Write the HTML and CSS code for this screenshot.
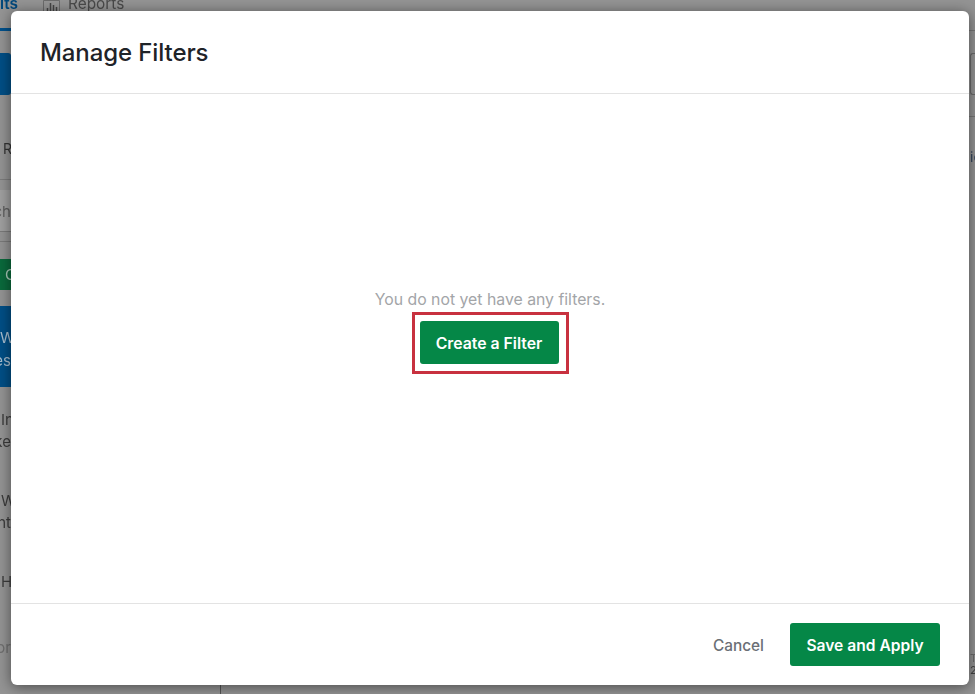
FILE: index.html
```html
<!DOCTYPE html>
<html lang="en">
<head>
<meta charset="utf-8">
<title>Manage Filters</title>
<link rel="stylesheet" href="styles.css">
</head>
<body>
<div class="backdrop">
  <div class="tabs">
    <span class="tab tab-active">Results</span>
    <span class="tab tab-reports">
      <svg class="tab-icon" viewBox="0 0 17 12" width="17" height="12"><path d="M.5 12V.5h16V12" fill="none" stroke="#6b6b6b"/><path d="M4.5 12V8M7.5 12V3M10.5 12V5M13.5 12V7" stroke="#454545" stroke-width="1.5"/></svg>
      Reports
    </span>
  </div>
  <div class="tab-rule"></div>
  <div class="side">
    <div class="side-primary"></div>
    <div class="side-row side-title">Re</div>
    <div class="side-row side-search">Search</div>
    <div class="side-sep"></div>
    <div class="side-green">Create</div>
    <div class="side-blue"><span>Welcome</span><span class="tail">Responses</span></div>
    <div class="side-item side-item-first"><span>In</span><span class="tail">Make</span></div>
    <div class="side-item side-item-second"><span>W</span><span class="tail">Intent</span></div>
    <div class="side-item side-item-last"><span>H</span></div>
    <div class="side-muted">For</div>
  </div>
</div>
<div class="right-line right-line-top"></div>
<div class="right-line right-line-mid"></div>
<div class="edge-frame"></div>
<div class="side-text-right">ie</div>
<div class="side-text-right side-text-t">T</div>
<div class="side-text-right side-text-n">22</div>
<div class="bottom-rule"></div>
<section class="modal">
  <header class="modal-head"><h1>Manage Filters</h1></header>
  <div class="modal-body">
    <p class="empty">You do not yet have any filters.</p>
    <div class="highlight"><button class="btn btn-create">Create a Filter</button></div>
  </div>
  <footer class="modal-foot">
    <button class="btn-cancel">Cancel</button>
    <button class="btn btn-save">Save and Apply</button>
  </footer>
</section>
</body>
</html>
```
FILE: styles.css
```css
* { box-sizing: border-box; }
html, body { margin: 0; height: 100%; }
body {
  width: 975px;
  height: 694px;
  overflow: hidden;
  position: relative;
  background: #949494;
  font-family: "Inter", "Liberation Sans", sans-serif;
}
.backdrop {
  height: 694px;
  padding-top: 1px;
  filter: blur(0.6px);
  color: #3a3a3a;
  font-size: 15px;
}
.tabs { display: flex; height: 32px; margin-top: -5px; font-size: 15.4px; line-height: 16px; }
.tab-active { color: #00487c; font-weight: 600; width: 43px; text-align: right; direction: rtl; overflow: hidden; white-space: nowrap; padding-right: 25px; height: 16px; }
.tab-reports { display: flex; gap: 8px; color: #4a4a4a; height: 16px; }
.tab-icon { margin-top: 4px; }
.tab-rule { width: 24px; height: 3px; background: #00518c; }
.side { width: 11px; }
.side-primary { width: 14px; height: 42px; margin-top: 22px; background: #004f86; border-radius: 3px; margin-left: -3px; }
.side-row { width: 11px; white-space: nowrap; overflow: hidden; }
.side-title { height: 85px; padding: 45px 0 0 3px; font-size: 14px; line-height: 18px; border-bottom: 1px solid #7c7c7c; color: #333; }
.side-search { height: 42px; margin-top: 10px; padding-top: 13px; background: #a0a0a0; border-bottom: 1px solid #7a7a7a; direction: rtl; color: #5f5f5f; font-size: 15px; line-height: 18px; }
.side-sep { width: 11px; height: 10px; border-bottom: 1px solid #7a7a7a; }
.side-green { width: 11px; height: 31px; margin-top: 17px; background: #0a6a3c; color: #a9c9b8; font-size: 15px; line-height: 31px; padding-left: 5px; overflow: hidden; white-space: nowrap; }
.side-blue { width: 11px; height: 81px; margin-top: 16px; padding-top: 4px; background: #004f86; color: #a9bfd0; font-size: 15px; line-height: 23px; display: flex; flex-direction: column; justify-content: center; overflow: hidden; white-space: nowrap; }
.side-item { width: 11px; display: flex; flex-direction: column; overflow: hidden; white-space: nowrap; line-height: 22px; font-size: 15px; color: #3c3c3c; }
.side-item span:first-child { padding-left: 1px; }
.tail { direction: rtl; }
.side-item-first { margin-top: 22px; height: 81px; }
.side-item-second { height: 81px; }
.side-item-last { height: 68px; }
.side-muted { width: 11px; overflow: hidden; white-space: nowrap; color: #6f6f6f; font-size: 15px; line-height: 18px; direction: rtl; }
.right-line { position: absolute; left: 969px; width: 6px; height: 1px; background: #777; }
.right-line-top { top: 30px; }
.right-line-mid { top: 116px; }
.edge-frame {
  position: absolute; left: 970px; top: 53px; width: 5px; height: 42px;
  border: 1px solid #6a6a6a; border-right: 0; border-radius: 3px 0 0 3px;
}
.side-text-right {
  position: absolute; left: 970px; top: 148px; font-size: 14px; color: #33445c; line-height: 18px; filter: blur(0.4px);
}
.side-text-t { top: 653px; font-size: 11px; line-height: 11px; color: #6c6c6c; }
.side-text-n { top: 665px; font-size: 11px; line-height: 11px; color: #444; }
.bottom-rule { position: absolute; left: 220px; top: 680px; width: 1px; height: 14px; background: #555; }
.modal {
  position: absolute;
  left: 11px; top: 11px;
  width: 958px; height: 674px;
  background: #fff;
  border-radius: 6px;
  box-shadow: 0 2px 14px rgba(0,0,0,.5);
  display: flex;
  flex-direction: column;
}
.modal-head {
  height: 83px;
  border-bottom: 1px solid #e3e3e3;
  padding: 0 29px;
  display: flex;
  align-items: center;
}
.modal-head h1 {
  margin: 0;
  font-size: 24px;
  font-weight: 500;
  letter-spacing: -0.1px;
  color: #1f2328;
}
.modal-body {
  flex: 1;
  display: flex;
  flex-direction: column;
  align-items: center;
  padding: 196px 0 0 0;
}
.empty {
  margin: 0;
  font-size: 15.8px;
  line-height: 20px;
  color: #a3a5a8;
}
.highlight {
  border: 3px solid #c8313f;
  padding: 6px 7px 7px 5px;
  margin-top: 2px;
  display: flex;
}
.btn {
  border: 0;
  border-radius: 3px;
  background: #058747;
  color: #fff;
  font: 600 15.6px "Inter", "Liberation Sans", sans-serif;
  padding: 1px 0 0;
}
.btn-create { width: 139px; height: 43px; font-size: 15.8px; }
.modal-foot {
  height: 82px;
  border-top: 1px solid #e3e3e3;
  display: flex;
  align-items: center;
  justify-content: flex-end;
  padding: 0 29px 0 0;
  gap: 26px;
}
.btn-cancel {
  border: 0;
  background: none;
  padding: 1px 0 0;
  color: #6b6f76;
  font: 500 15.4px "Inter", "Liberation Sans", sans-serif;
}
.btn-save { width: 150px; height: 43px; }
```
